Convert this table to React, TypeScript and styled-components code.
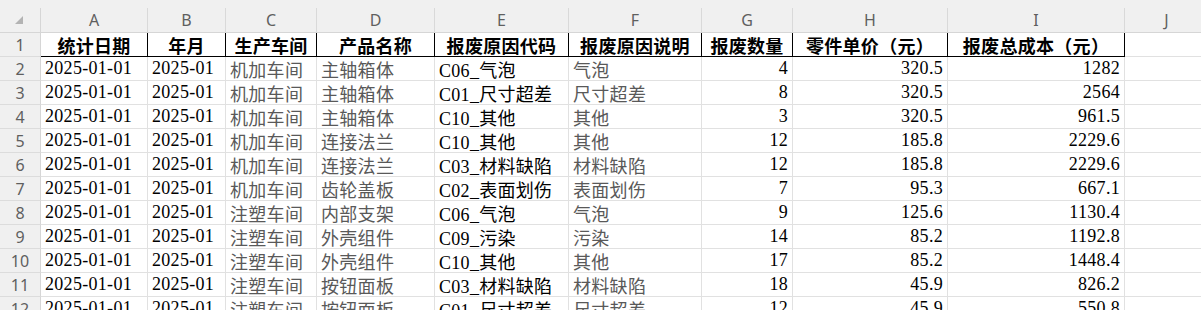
import styled, { createGlobalStyle } from 'styled-components';

const GlobalStyle = createGlobalStyle`
  html, body {
    margin: 0;
    padding: 0;
    background: #f0f0f0;
    overflow: hidden;
  }
`;

const widths = [41, 107, 78, 91, 118, 134, 133, 91, 155, 177, 84];
const letters = ['A', 'B', 'C', 'D', 'E', 'F', 'G', 'H', 'I', 'J'];

const titles = ['统计日期', '年月', '生产车间', '产品名称', '报废原因代码', '报废原因说明', '报废数量', '零件单价（元）', '报废总成本（元）'];

// 每列: 对齐方式, 是否灰色文字
const colAlign: ('left' | 'right')[] = ['left', 'left', 'left', 'left', 'left', 'left', 'right', 'right', 'right'];
const colMuted = [false, false, true, true, false, true, false, false, false];

const rows: (string | number)[][] = [
  ['2025-01-01', '2025-01', '机加车间', '主轴箱体', 'C06_气泡', '气泡', 4, '320.5', '1282'],
  ['2025-01-01', '2025-01', '机加车间', '主轴箱体', 'C01_尺寸超差', '尺寸超差', 8, '320.5', '2564'],
  ['2025-01-01', '2025-01', '机加车间', '主轴箱体', 'C10_其他', '其他', 3, '320.5', '961.5'],
  ['2025-01-01', '2025-01', '机加车间', '连接法兰', 'C10_其他', '其他', 12, '185.8', '2229.6'],
  ['2025-01-01', '2025-01', '机加车间', '连接法兰', 'C03_材料缺陷', '材料缺陷', 12, '185.8', '2229.6'],
  ['2025-01-01', '2025-01', '机加车间', '齿轮盖板', 'C02_表面划伤', '表面划伤', 7, '95.3', '667.1'],
  ['2025-01-01', '2025-01', '注塑车间', '内部支架', 'C06_气泡', '气泡', 9, '125.6', '1130.4'],
  ['2025-01-01', '2025-01', '注塑车间', '外壳组件', 'C09_污染', '污染', 14, '85.2', '1192.8'],
  ['2025-01-01', '2025-01', '注塑车间', '外壳组件', 'C10_其他', '其他', 17, '85.2', '1448.4'],
  ['2025-01-01', '2025-01', '注塑车间', '按钮面板', 'C03_材料缺陷', '材料缺陷', 18, '45.9', '826.2'],
  ['2025-01-01', '2025-01', '注塑车间', '按钮面板', 'C01_尺寸超差', '尺寸超差', 12, '45.9', '550.8'],
];

const Wrapper = styled.div`
  padding-top: 8px;
  width: 1201px;
  overflow: hidden;
`;

const Sheet = styled.div`
  display: grid;
  grid-template-columns: ${widths.map((w) => w + 'px').join(' ')};
  grid-template-rows: 25px;
  grid-auto-rows: 24px;
  width: ${widths.reduce((a, b) => a + b, 0)}px;
`;

const Corner = styled.div`
  position: relative;
  background: #f0f0f0;
  border-right: 1px solid #d6d6d6;
  border-bottom: 1px solid #d6d6d6;
  box-sizing: border-box;
`;

const Triangle = styled.div`
  position: absolute;
  right: 17px;
  bottom: 8px;
  width: 0;
  height: 0;
  border-left: 8px solid transparent;
  border-bottom: 8px solid #b3b3b3;
`;

const ColHead = styled.div`
  background: #f0f0f0;
  border-right: 1px solid #d9d9d9;
  border-bottom: 1px solid #d6d6d6;
  box-sizing: border-box;
  display: flex;
  align-items: center;
  justify-content: center;
  font-family: 'Noto Sans', 'Liberation Sans', sans-serif;
  font-size: 16px;
  color: #5f5f5f;
`;

const RowHead = styled.div`
  background: #f0f0f0;
  border-right: 1px solid #d6d6d6;
  border-bottom: 1px solid #dcdcdc;
  box-sizing: border-box;
  display: flex;
  align-items: center;
  justify-content: center;
  font-family: 'Noto Sans', 'Liberation Sans', sans-serif;
  font-size: 16px;
  color: #5f5f5f;
`;

const Cell = styled.div<{ $align?: 'left' | 'right' | 'center'; $muted?: boolean; $title?: boolean }>`
  background: #ffffff;
  box-sizing: border-box;
  border-right: 1px solid ${(p) => (p.$title ? '#000000' : '#e1e1e1')};
  border-bottom: 1px solid ${(p) => (p.$title ? '#000000' : '#e1e1e1')};
  display: flex;
  align-items: center;
  justify-content: ${(p) => (p.$align === 'right' ? 'flex-end' : p.$align === 'center' ? 'center' : 'flex-start')};
  padding: 0 4px;
  white-space: nowrap;
  overflow: hidden;
  font-family: 'Liberation Serif', 'Noto Sans CJK SC', serif;
  font-size: 18px;
  letter-spacing: 0.3px;
  font-weight: ${(p) => (p.$title ? 700 : 400)};
  color: ${(p) => (p.$muted ? '#595959' : '#000000')};
`;

const Row = ({ n, values }: { n: number; values: (string | number)[] }) => (
  <>
    <RowHead>{n}</RowHead>
    {values.map((v, c) => (
      <Cell key={c} $align={colAlign[c]} $muted={colMuted[c]}>
        {v}
      </Cell>
    ))}
    <Cell />
  </>
);

const App = () => {
  return (
    <>
      <GlobalStyle />
      <Wrapper>
        <Sheet>
          <Corner>
            <Triangle />
          </Corner>
          {letters.map((l) => (
            <ColHead key={l}>{l}</ColHead>
          ))}

          <RowHead>1</RowHead>
          {titles.map((t) => (
            <Cell key={t} $align="center" $title>
              {t}
            </Cell>
          ))}
          <Cell />

          {rows.map((r, i) => (
            <Row key={i} n={i + 2} values={r} />
          ))}
        </Sheet>
      </Wrapper>
    </>
  );
};

export default App;
